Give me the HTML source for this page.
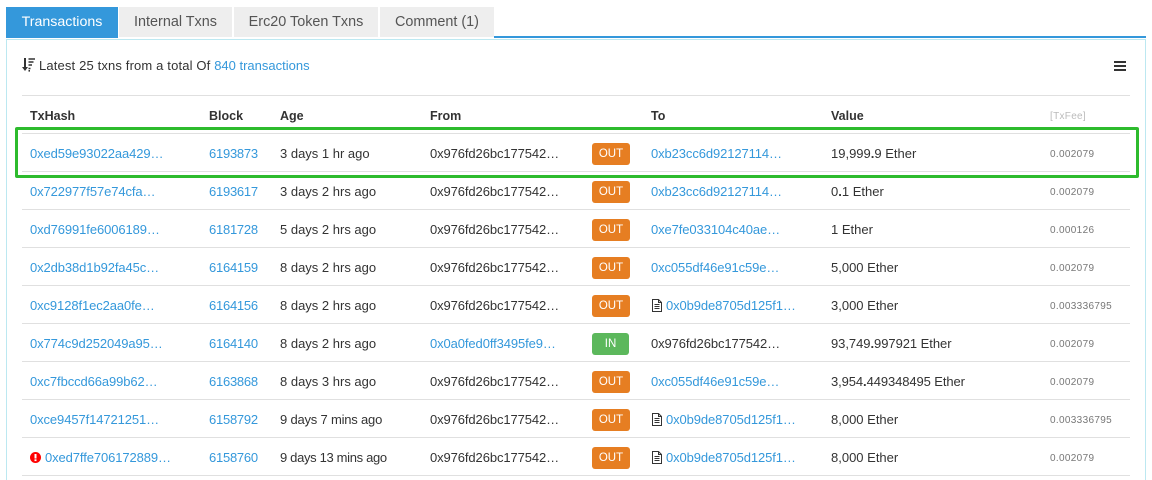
<!DOCTYPE html>
<html>
<head>
<meta charset="utf-8">
<style>
html,body{margin:0;padding:0;background:#fff;width:1152px;height:480px;overflow:hidden}
body{font-family:"Liberation Sans",sans-serif;font-size:13px;color:#333;position:relative}
.a{position:absolute;white-space:nowrap}
a{color:#3498db;text-decoration:none}
.tab{position:absolute;top:7px;height:30px;background:#eee;color:#555;font-size:14.4px;line-height:30px;text-align:center}
.line{position:absolute;left:22px;width:1108px;height:1px;background:#e0e0e0}
.th{position:absolute;top:108px;font-weight:bold;font-size:12.5px;line-height:16px;color:#333}
.r{position:absolute;left:0;width:1152px;height:38px}
.r>span{position:absolute;top:1px;line-height:38px;white-space:nowrap}
.h,.f,.t,.t2{letter-spacing:-.1px}
.h{left:30px}.b{left:209px;letter-spacing:-.25px}.ag{left:280px}.f{left:430px}.t{left:651px}.t2{left:666px}.v{left:831px}
.r>span.fee{left:1050px;top:2px;font-size:10px;color:#777;letter-spacing:.33px}
.r>span.bd{left:592px;top:9px;width:38px;height:22px;line-height:23px;background:#e67e22;color:#fff;border-radius:3px;text-align:center;font-size:11.5px;letter-spacing:0}
.r>span.in{background:#5cb85c;width:37px}
.r svg{position:absolute;left:651px;top:13px}
</style>
</head>
<body>
<div class="a" style="left:6px;top:7px;width:112px;height:30px;background:#3498db;color:#fff;font-size:14.2px;line-height:30px;text-align:center">Transactions</div>
<div class="tab" style="left:119px;width:113px">Internal Txns</div>
<div class="tab" style="left:234px;width:144px">Erc20 Token Txns</div>
<div class="tab" style="left:380px;width:114px">Comment (1)</div>
<div class="a" style="left:494px;top:36px;width:652px;height:2px;background:#3498db"></div>
<div class="a" style="left:6px;top:36px;width:112px;height:2px;background:#3498db"></div>
<div class="a" style="left:6px;top:39px;width:1138px;height:441px;border:1px solid #bce8f1;border-bottom:0"></div>

<svg class="a" style="left:22px;top:58px" width="14" height="14" viewBox="0 0 14 14">
<path d="M2 0h2v10h-2z" fill="#333"/>
<path d="M0 9h6L3 13z" fill="#333"/>
<path d="M6.5 1h6.5M6.5 4h5M6.5 7h3.500M6.500 10.500h2M6.500 12.800h1.500" stroke="#333" stroke-width="1.600" fill="none"/>
</svg>
<div class="a" style="left:39px;top:58px;line-height:16px;letter-spacing:.15px">Latest 25 txns from a total Of <a href="#" style="letter-spacing:0">840 transactions</a></div>

<div class="a" style="left:1114px;top:61px;width:12px;height:2px;background:#333"></div>
<div class="a" style="left:1114px;top:65px;width:12px;height:2px;background:#333"></div>
<div class="a" style="left:1114px;top:69px;width:12px;height:2px;background:#333"></div>

<div class="line" style="top:95px"></div>
<div class="th" style="left:30px">TxHash</div>
<div class="th" style="left:209px">Block</div>
<div class="th" style="left:280px">Age</div>
<div class="th" style="left:430px">From</div>
<div class="th" style="left:651px">To</div>
<div class="th" style="left:831px">Value</div>
<div class="a" style="left:1050px;top:110px;font-size:10px;line-height:13px;color:#bbb;font-weight:normal;letter-spacing:.3px">[TxFee]</div>

<div class="line" style="top:133px"></div>
<div class="line" style="top:171px"></div>
<div class="line" style="top:209px"></div>
<div class="line" style="top:247px"></div>
<div class="line" style="top:285px"></div>
<div class="line" style="top:323px"></div>
<div class="line" style="top:361px"></div>
<div class="line" style="top:399px"></div>
<div class="line" style="top:437px"></div>
<div class="line" style="top:475px"></div>

<div class="r" style="top:134px"><span class="h"><a href="#">0xed59e93022aa429…</a></span><span class="b"><a href="#">6193873</a></span><span class="ag">3 days 1 hr ago</span><span class="f">0x976fd26bc177542…</span><span class="bd">OUT</span><span class="t"><a href="#">0xb23cc6d92127114…</a></span><span class="v">19,999<b>.</b>9 Ether</span><span class="fee">0.002079</span></div>

<div class="r" style="top:172px"><span class="h"><a href="#">0x722977f57e74cfa…</a></span><span class="b"><a href="#">6193617</a></span><span class="ag">3 days 2 hrs ago</span><span class="f">0x976fd26bc177542…</span><span class="bd">OUT</span><span class="t"><a href="#">0xb23cc6d92127114…</a></span><span class="v">0<b>.</b>1 Ether</span><span class="fee">0.002079</span></div>

<div class="r" style="top:210px"><span class="h"><a href="#">0xd76991fe6006189…</a></span><span class="b"><a href="#">6181728</a></span><span class="ag">5 days 2 hrs ago</span><span class="f">0x976fd26bc177542…</span><span class="bd">OUT</span><span class="t"><a href="#">0xe7fe033104c40ae…</a></span><span class="v">1 Ether</span><span class="fee">0.000126</span></div>

<div class="r" style="top:248px"><span class="h"><a href="#">0x2db38d1b92fa45c…</a></span><span class="b"><a href="#">6164159</a></span><span class="ag">8 days 2 hrs ago</span><span class="f">0x976fd26bc177542…</span><span class="bd">OUT</span><span class="t"><a href="#">0xc055df46e91c59e…</a></span><span class="v">5,000 Ether</span><span class="fee">0.002079</span></div>

<div class="r" style="top:286px"><span class="h"><a href="#">0xc9128f1ec2aa0fe…</a></span><span class="b"><a href="#">6164156</a></span><span class="ag">8 days 2 hrs ago</span><span class="f">0x976fd26bc177542…</span><span class="bd">OUT</span><svg width="12" height="13" viewBox="0 0 12 13"><path d="M1.5.5h6l3 3v9h-9zM7.5.5v3h3M3.500 5.500h5M3.500 7.500h5M3.500 9.500h5" fill="none" stroke="#333"/></svg><span class="t2"><a href="#">0x0b9de8705d125f1…</a></span><span class="v">3,000 Ether</span><span class="fee">0.003336795</span></div>

<div class="r" style="top:324px"><span class="h"><a href="#">0x774c9d252049a95…</a></span><span class="b"><a href="#">6164140</a></span><span class="ag">8 days 2 hrs ago</span><span class="f"><a href="#">0x0a0fed0ff3495fe9…</a></span><span class="bd in">IN</span><span class="t">0x976fd26bc177542…</span><span class="v" style="letter-spacing:-.05px">93,749<b>.</b>997921 Ether</span><span class="fee">0.002079</span></div>

<div class="r" style="top:362px"><span class="h"><a href="#">0xc7fbccd66a99b62…</a></span><span class="b"><a href="#">6163868</a></span><span class="ag">8 days 3 hrs ago</span><span class="f">0x976fd26bc177542…</span><span class="bd">OUT</span><span class="t"><a href="#">0xc055df46e91c59e…</a></span><span class="v" style="letter-spacing:-.1px">3,954<b>.</b>449348495 Ether</span><span class="fee">0.002079</span></div>

<div class="r" style="top:400px"><span class="h"><a href="#">0xce9457f14721251…</a></span><span class="b"><a href="#">6158792</a></span><span class="ag" style="letter-spacing:-.2px">9 days 7 mins ago</span><span class="f">0x976fd26bc177542…</span><span class="bd">OUT</span><svg width="12" height="13" viewBox="0 0 12 13"><path d="M1.5.5h6l3 3v9h-9zM7.5.5v3h3M3.500 5.500h5M3.500 7.500h5M3.500 9.500h5" fill="none" stroke="#333"/></svg><span class="t2"><a href="#">0x0b9de8705d125f1…</a></span><span class="v">8,000 Ether</span><span class="fee">0.003336795</span></div>

<div class="r" style="top:438px"><svg style="left:30px;top:14px" width="11" height="11" viewBox="0 0 11 11"><circle cx="5.5" cy="5.5" r="5.5" fill="#f00"/><rect x="4.500" y="2" width="2" height="4.500" fill="#fff"/><rect x="4.500" y="7.300" width="2" height="1.800" fill="#fff"/></svg><span class="h" style="left:45px"><a href="#">0xed7ffe706172889…</a></span><span class="b"><a href="#">6158760</a></span><span class="ag" style="letter-spacing:-.33px">9 days 13 mins ago</span><span class="f">0x976fd26bc177542…</span><span class="bd">OUT</span><svg width="12" height="13" viewBox="0 0 12 13"><path d="M1.5.5h6l3 3v9h-9zM7.5.5v3h3M3.500 5.500h5M3.500 7.500h5M3.500 9.500h5" fill="none" stroke="#333"/></svg><span class="t2"><a href="#">0x0b9de8705d125f1…</a></span><span class="v">8,000 Ether</span><span class="fee">0.002079</span></div>

<div class="a" style="left:15px;top:127px;width:1118px;height:45px;border:3px solid #2dbb2d;border-radius:2px"></div>
</body>
</html>
